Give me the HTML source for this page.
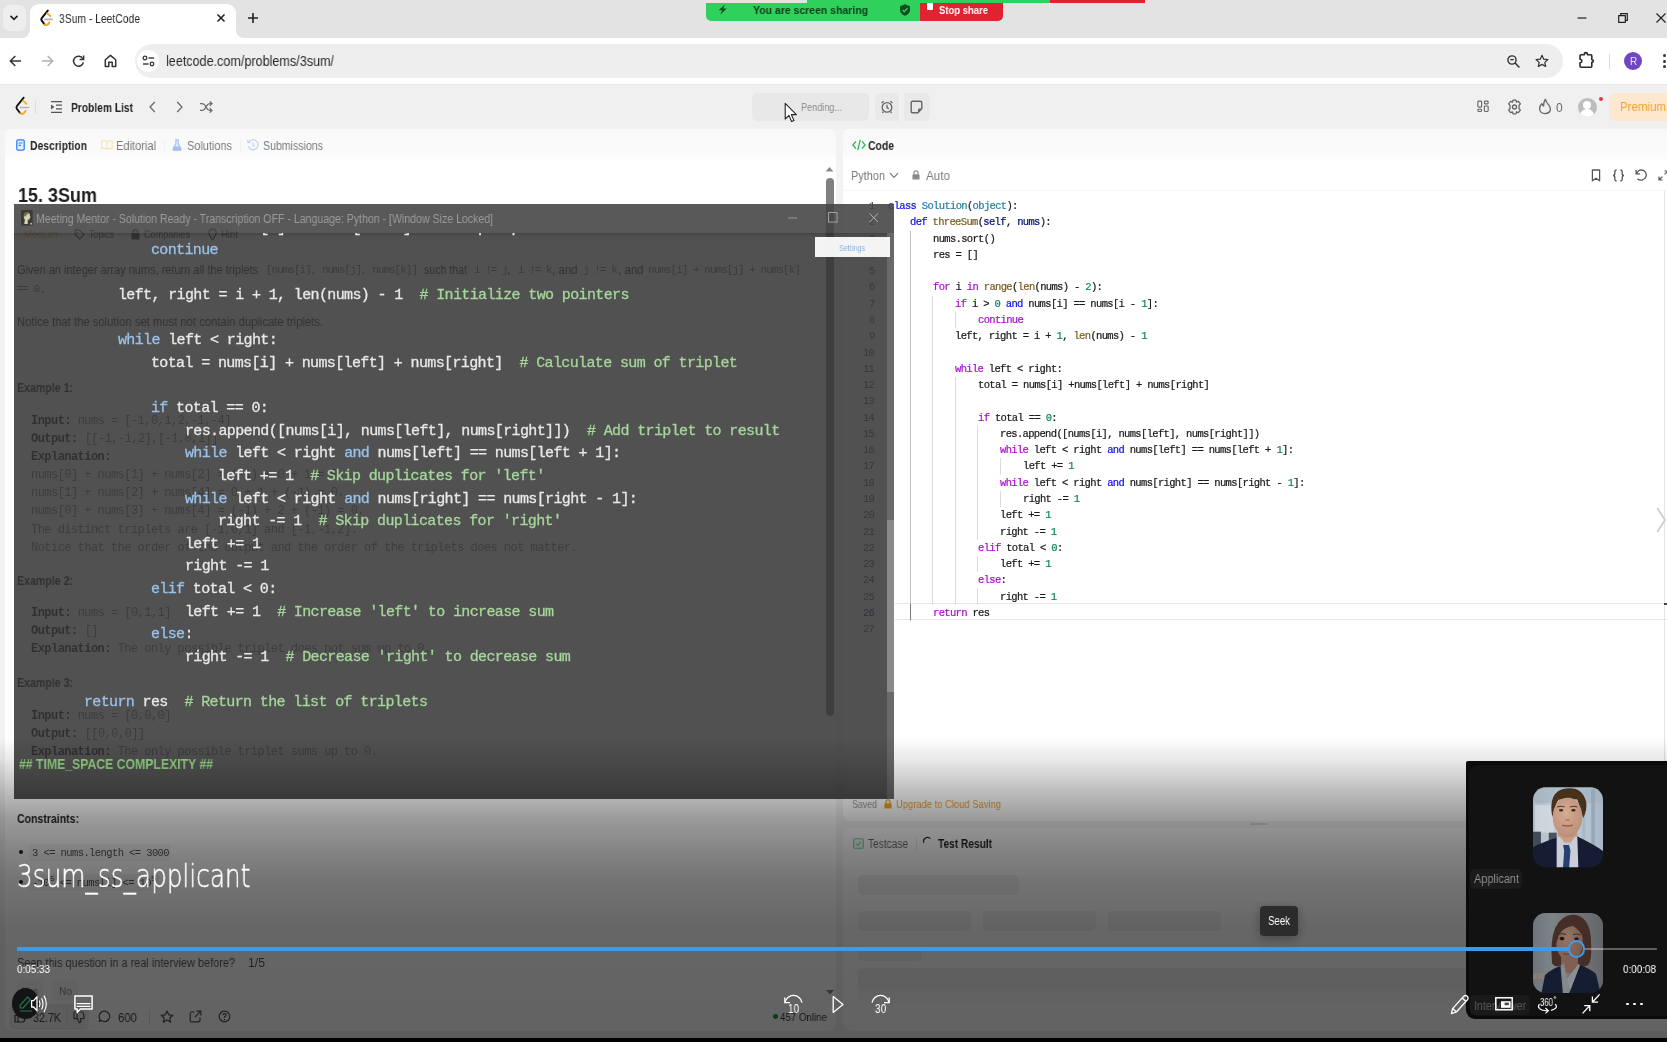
<!DOCTYPE html>
<html lang="en"><head><meta charset="utf-8"><title>3Sum - LeetCode</title>
<style>
html,body{margin:0;padding:0;background:#fff;}
body{width:1667px;height:1042px;overflow:hidden;font-family:"Liberation Sans",sans-serif;}
#root{position:relative;width:1667px;height:1042px;overflow:hidden;background:#f3f3f3;}
.t{position:absolute;white-space:nowrap;will-change:transform;}
.b{position:absolute;}
svg{position:absolute;overflow:visible;}
.blur{filter:blur(.35px);}
.ed{font:400 10.5px/14px 'Liberation Mono',monospace;letter-spacing:-0.661px;-webkit-text-stroke:.22px currentColor;}
.oc{font:400 15px/20px 'Liberation Mono',monospace;letter-spacing:-0.627px;-webkit-text-stroke:.3px currentColor;}

</style></head>
<body>
<div id="root">
<div class="b" style="left:0;top:0;width:1667px;height:38px;background:#e3e3e3"></div>
<div class="b" style="left:3px;top:5px;width:23px;height:26px;border-radius:7px;background:#eeeeee"></div>
<svg style="left:9px;top:14px" width="10" height="8" viewBox="0 0 10 8"><path d="M1.5 1.8 L5 5.3 L8.5 1.8" fill="none" stroke="#222" stroke-width="1.7"/></svg>
<div class="b" style="left:30px;top:4px;width:206px;height:34px;border-radius:9px 9px 0 0;background:#fff"></div>
<svg style="left:22px;top:30px" width="8" height="8" viewBox="0 0 8 8"><path d="M8 0 V8 H0 A8 8 0 0 0 8 0Z" fill="#fff"/></svg>
<svg style="left:236px;top:30px" width="8" height="8" viewBox="0 0 8 8"><path d="M0 0 V8 H8 A8 8 0 0 1 0 0Z" fill="#fff"/></svg>
<svg style="left:39.5px;top:10px" width="13" height="16" viewBox="0 0 14.5 18"><path d="M8.7 0.6 L1.9 9.1 Q0.8 10.5 1.9 11.9 L5.2 16.3" fill="none" stroke="#111" stroke-width="2.3" stroke-linecap="round" stroke-linejoin="round"/><path d="M5.2 16.3 Q7.4 17.8 9.2 15.8 L10.6 13.8" fill="none" stroke="#f5a623" stroke-width="2.3" stroke-linecap="round"/><path d="M7.9 3.7 L11.5 6.8" fill="none" stroke="#f5a623" stroke-width="2.1" stroke-linecap="round"/><path d="M5.4 10.5 H13.6" stroke="#b3b3b3" stroke-width="1.9" stroke-linecap="round"/></svg>
<div class="t " style="left:59.0px;top:10.5px;font:400 12px/16px 'Liberation Sans',sans-serif;color:#2a2a2a;transform-origin:0 50%;transform:scaleX(0.8612);">3Sum - LeetCode</div>
<svg style="left:216px;top:13px" width="10" height="10" viewBox="0 0 10 10"><path d="M1.5 1.5 L8.5 8.5 M8.5 1.5 L1.5 8.5" stroke="#222" stroke-width="1.6"/></svg>
<svg style="left:247px;top:12px" width="12" height="12" viewBox="0 0 12 12"><path d="M6 1 V11 M1 6 H11" stroke="#222" stroke-width="1.6"/></svg>
<svg style="left:1577px;top:13px" width="10" height="10" viewBox="0 0 10 10"><path d="M0.5 5 H9.5" stroke="#222" stroke-width="1.2"/></svg>
<svg style="left:1618px;top:13px" width="10" height="10" viewBox="0 0 10 10"><path d="M0.7 2.7 H7.3 V9.3 H0.7Z M2.7 2.7 V0.7 H9.3 V7.3 H7.3" fill="none" stroke="#222" stroke-width="1.2"/></svg>
<svg style="left:1656px;top:13px" width="11" height="10" viewBox="0 0 11 10"><path d="M0.5 0.5 L9.5 9.5 M9.5 0.5 L0.5 9.5" stroke="#222" stroke-width="1.2"/></svg>
<div class="b" style="left:706px;top:2.5px;width:214px;height:18px;border-radius:0 0 0 5px;background:#2fd15c"></div>
<div class="b" style="left:920px;top:2.5px;width:83px;height:18px;border-radius:0 0 5px 0;background:#e0242f"></div>
<svg style="left:717px;top:4px" width="10" height="11" viewBox="0 0 10 11"><path d="M8 0.4 L1.6 6.2 H5.2 L3.2 10.8 L9.8 4.6 H6.2Z" fill="#124d22"/></svg>
<div class="t " style="left:753.0px;top:3.0px;font:700 11px/14px 'Liberation Sans',sans-serif;color:#0f3d1b;transform-origin:0 50%;transform:scaleX(0.9517);">You are screen sharing</div>
<svg style="left:899px;top:4px" width="12" height="12" viewBox="0 0 12 12"><path d="M6 0.3 L11 2.2 V6 Q11 9.8 6 11.7 Q1 9.8 1 6 V2.2Z" fill="#124d22"/><path d="M3.6 6 L5.3 7.7 L8.5 4.3" fill="none" stroke="#2fd15c" stroke-width="1.3"/></svg>
<div class="b" style="left:927px;top:3px;width:6px;height:7px;background:#fff;border-radius:1px"></div>
<div class="t " style="left:939.0px;top:2.5px;font:700 11px/14px 'Liberation Sans',sans-serif;color:#fff;transform-origin:0 50%;transform:scaleX(0.8620);">Stop share</div>
<div class="b" style="left:807px;top:0;width:243px;height:3px;background:#2fd15c"></div>
<div class="b" style="left:1050px;top:0;width:95px;height:3px;background:#e0242f"></div>
<div class="b" style="left:0;top:38px;width:1667px;height:46px;background:#fff"></div>
<div class="b" style="left:0;top:84px;width:1667px;height:1px;background:#e9e9e9"></div>
<svg style="left:9px;top:55px" width="13" height="12" viewBox="0 0 13 12"><path d="M6.3 1 L1.3 6 L6.3 11 M1.5 6 H12" fill="none" stroke="#333" stroke-width="1.5"/></svg>
<svg style="left:41px;top:55px" width="13" height="12" viewBox="0 0 13 12"><path d="M6.7 1 L11.7 6 L6.7 11 M11.5 6 H1" fill="none" stroke="#b0b0b0" stroke-width="1.5"/></svg>
<svg style="left:72px;top:54px" width="13" height="14" viewBox="0 0 13 14"><path d="M10.8 4.6 A5 5 0 1 0 11.4 8.3" fill="none" stroke="#333" stroke-width="1.5"/><path d="M11.6 1.4 V5.4 H7.6" fill="none" stroke="#333" stroke-width="1.5"/></svg>
<svg style="left:104px;top:54px" width="13" height="14" viewBox="0 0 13 14"><path d="M1.3 5.8 L6.5 1.4 L11.7 5.8 V12.6 H8.2 V8.2 H4.8 V12.6 H1.3Z" fill="none" stroke="#333" stroke-width="1.5" stroke-linejoin="round"/></svg>
<div class="b" style="left:135px;top:44px;width:1428px;height:34px;border-radius:17px;background:#eeeeee"></div>
<div class="b" style="left:137px;top:50px;width:22px;height:22px;border-radius:11px;background:#fff"></div>
<svg style="left:142px;top:55px" width="13" height="12" viewBox="0 0 13 12"><circle cx="3" cy="3" r="1.8" fill="none" stroke="#333" stroke-width="1.3"/><path d="M6.5 3 H12" stroke="#333" stroke-width="1.4"/><circle cx="10" cy="9" r="1.8" fill="none" stroke="#333" stroke-width="1.3"/><path d="M1 9 H6.5" stroke="#333" stroke-width="1.4"/></svg>
<div class="t " style="left:166.0px;top:52.0px;font:400 14px/18px 'Liberation Sans',sans-serif;color:#2a2a2a;transform-origin:0 50%;transform:scaleX(0.8995);">leetcode.com/problems/3sum/</div>
<svg style="left:1506px;top:53.5px" width="15" height="15" viewBox="0 0 15 15"><circle cx="6" cy="6" r="4.1" fill="none" stroke="#333" stroke-width="1.4"/><path d="M9.1 9.1 L13.4 13.6" stroke="#333" stroke-width="1.5"/><path d="M4.2 5.6 H7.8" stroke="#333" stroke-width="1.3"/></svg>
<svg style="left:1534.8px;top:53.8px" width="14" height="13.6" viewBox="0 0 16 15"><path d="M8 1.2 L10 5.6 L14.8 6.1 L11.2 9.3 L12.2 14 L8 11.6 L3.8 14 L4.8 9.3 L1.2 6.1 L6 5.6Z" fill="none" stroke="#333" stroke-width="1.4" stroke-linejoin="round"/></svg>
<svg style="left:1578px;top:51px" width="17" height="18" viewBox="0 0 17 18"><path d="M3 3.7 H6.4 V3 Q6.4 1.6 7.9 1.6 Q9.4 1.6 9.4 3 V3.7 H12.8 Q13.8 3.7 13.8 4.7 V8.6 Q15.4 8.8 15.4 10 Q15.4 11.2 13.8 11.4 V15.2 Q13.8 16.2 12.8 16.2 H3 Q2 16.2 2 15.2 V11.8 Q3.9 11.6 3.9 10 Q3.9 8.4 2 8.2 V4.7 Q2 3.7 3 3.7Z" fill="none" stroke="#2a2a2a" stroke-width="1.6" stroke-linejoin="round"/></svg>
<div class="b" style="left:1608.6px;top:54px;width:1px;height:15px;background:#dcdcdc"></div>
<div class="b" style="left:1624px;top:52px;width:18px;height:18px;border-radius:9px;background:#6f45c0"></div>
<div class="t " style="left:1629.5px;top:54.5px;font:400 10px/13px 'Liberation Sans',sans-serif;color:#e8defa;">R</div>
<div class="b" style="left:1662.7px;top:54.4px;width:3px;height:3px;border-radius:2px;background:#333"></div><div class="b" style="left:1662.7px;top:59.6px;width:3px;height:3px;border-radius:2px;background:#333"></div><div class="b" style="left:1662.7px;top:64.8px;width:3px;height:3px;border-radius:2px;background:#333"></div>
<div class="b" style="left:0;top:85px;width:1667px;height:44px;background:#f0f0f0"></div>
<svg style="left:15px;top:97px" width="14.5" height="18" viewBox="0 0 14.5 18"><path d="M8.7 0.6 L1.9 9.1 Q0.8 10.5 1.9 11.9 L5.2 16.3" fill="none" stroke="#111" stroke-width="1.8" stroke-linecap="round" stroke-linejoin="round"/><path d="M5.2 16.3 Q7.4 17.8 9.2 15.8 L10.6 13.8" fill="none" stroke="#f5a623" stroke-width="1.8" stroke-linecap="round"/><path d="M7.9 3.7 L11.5 6.8" fill="none" stroke="#f5a623" stroke-width="1.7" stroke-linecap="round"/><path d="M5.4 10.5 H13.6" stroke="#b3b3b3" stroke-width="1.6" stroke-linecap="round"/></svg>
<div class="b" style="left:35px;top:100px;width:1px;height:14px;background:#dddddd"></div>
<svg style="left:50px;top:101px" width="13" height="12" viewBox="0 0 13 12"><path d="M1 0.6 H12 M6 4.2 H12 M6 7.8 H12 M1 11.4 H12" stroke="#555" stroke-width="1.3"/><path d="M1 3.4 L4.4 6 L1 8.6Z" fill="#555"/></svg>
<div class="t " style="left:71.0px;top:99.5px;font:700 12.5px/16px 'Liberation Sans',sans-serif;color:#262626;transform-origin:0 50%;transform:scaleX(0.8190);">Problem List</div>
<svg style="left:148px;top:101px" width="9" height="12" viewBox="0 0 9 12"><path d="M6.8 1 L2 6 L6.8 11" fill="none" stroke="#6a6a6a" stroke-width="1.3"/></svg>
<svg style="left:175px;top:101px" width="9" height="12" viewBox="0 0 9 12"><path d="M2.2 1 L7 6 L2.2 11" fill="none" stroke="#6a6a6a" stroke-width="1.3"/></svg>
<svg style="left:198.5px;top:100px" width="14" height="14" viewBox="0 0 14 14"><path d="M1 3.6 H3 Q4.8 3.6 5.8 5.1 L8.2 8.9 Q9.2 10.4 11 10.4 H12.8 M1 10.4 H3 Q4.8 10.4 5.8 8.9 L8.2 5.1 Q9.2 3.6 11 3.6 H12.8 M10.8 1.4 L13 3.6 L10.8 5.8 M10.8 8.2 L13 10.4 L10.8 12.6" fill="none" stroke="#6a6a6a" stroke-width="1.2"/></svg>
<div class="b" style="left:752px;top:93px;width:117px;height:28px;border-radius:5px;background:#e8e8e8"></div>
<div class="t " style="left:801.0px;top:100.0px;font:400 11.5px/15px 'Liberation Sans',sans-serif;color:#8c8c8c;transform-origin:0 50%;transform:scaleX(0.7916);">Pending...</div>
<div class="b" style="left:875px;top:93px;width:24px;height:28px;border-radius:5px 0 0 5px;background:#e9e9e9"></div>
<div class="b" style="left:904px;top:93px;width:26px;height:28px;border-radius:0 5px 5px 0;background:#e9e9e9"></div>
<svg style="left:880px;top:100px" width="14" height="14" viewBox="0 0 14 14"><circle cx="7" cy="7.4" r="4.8" fill="none" stroke="#666" stroke-width="1.3"/><path d="M7 4.8 V7.6 L8.8 8.8 M1.6 3 L3.6 1.2 M12.4 3 L10.4 1.2 M3.4 11.6 L2.4 13 M10.6 11.6 L11.6 13" fill="none" stroke="#666" stroke-width="1.3"/></svg>
<svg style="left:910px;top:100px" width="13" height="14" viewBox="0 0 13 14"><path d="M2.8 1.2 H10.2 Q11.8 1.2 11.8 2.8 V8.6 L8 12.8 H2.8 Q1.2 12.8 1.2 11.2 V2.8 Q1.2 1.2 2.8 1.2Z" fill="none" stroke="#666" stroke-width="1.4"/><path d="M11.8 8.6 H9.4 Q8 8.6 8 10 V12.8Z" fill="#666"/></svg>
<svg style="left:784px;top:102px" width="14" height="21" viewBox="0 0 14 21"><path d="M1.2 1.4 V17 L5 13.4 L7.6 19.6 L10 18.6 L7.4 12.6 H12.4Z" fill="#fff" stroke="#222" stroke-width="1.1" stroke-linejoin="round"/></svg>
<svg style="left:1477.2px;top:100.2px" width="12" height="12.6" viewBox="0 0 14 14"><rect x="1" y="1" width="4.4" height="7" rx="1" fill="none" stroke="#666" stroke-width="1.3"/><rect x="8.6" y="1" width="4.4" height="3.2" rx="1" fill="none" stroke="#666" stroke-width="1.3"/><rect x="1" y="10.4" width="4.4" height="2.6" rx="1" fill="none" stroke="#666" stroke-width="1.3"/><rect x="8.6" y="6.6" width="4.4" height="6.4" rx="1" fill="none" stroke="#666" stroke-width="1.3"/></svg>
<svg style="left:1507px;top:99px" width="15" height="16" viewBox="0 0 15 16"><path d="M6 1.2 H9 L9.5 3.2 L11.4 2.4 L13.4 4.8 L12 6.4 V9.6 L13.4 11.2 L11.4 13.6 L9.5 12.8 L9 14.8 H6 L5.5 12.8 L3.6 13.6 L1.6 11.2 L3 9.6 V6.4 L1.6 4.8 L3.6 2.4 L5.5 3.2Z" fill="none" stroke="#666" stroke-width="1.3" stroke-linejoin="round"/><circle cx="7.5" cy="8" r="2" fill="none" stroke="#666" stroke-width="1.3"/></svg>
<svg style="left:1538px;top:98px" width="14" height="17" viewBox="0 0 14 17"><path d="M7.4 1.2 Q8 4 10.4 6.6 Q12.6 9 12.4 11.4 Q12 15.4 7 15.6 Q2 15.4 1.6 11 Q1.4 8 4 5.6 Q4.4 7.6 5.6 8 Q5.4 4 7.4 1.2Z" fill="none" stroke="#666" stroke-width="1.3" stroke-linejoin="round"/></svg>
<div class="t " style="left:1556.0px;top:100.0px;font:400 12px/16px 'Liberation Sans',sans-serif;color:#666;">0</div>
<div class="b" style="left:1577.5px;top:97.5px;width:19px;height:19px;border-radius:10px;background:#bdbdbd;overflow:hidden"><div class="b" style="left:5.5px;top:3.5px;width:8px;height:8px;border-radius:4px;background:#fff"></div><div class="b" style="left:2.5px;top:11px;width:14px;height:13px;border-radius:7px;background:#fff"></div></div>
<div class="b" style="left:1598.5px;top:97px;width:4.4px;height:4.4px;border-radius:3px;background:#e8334a"></div>
<div class="b" style="left:1609px;top:93px;width:70px;height:28px;border-radius:6px;background:#fbe8cf"></div>
<div class="t " style="left:1620.0px;top:99.0px;font:400 12.5px/16px 'Liberation Sans',sans-serif;color:#f5a02d;transform-origin:0 50%;transform:scaleX(0.9199);">Premium</div>
<div class="b" style="left:5px;top:129px;width:831px;height:902px;border-radius:8px;background:#fff;overflow:hidden"><div class="b" style="left:0;top:0;width:831px;height:33px;background:linear-gradient(#f9f9f9,#fafafa 70%,#fff)"></div></div>
<svg style="left:16px;top:139px" width="9" height="12" viewBox="0 0 9 12"><rect x="0.8" y="0.8" width="7.4" height="10.4" rx="1.4" fill="#e5f0ff" stroke="#2f7ff0" stroke-width="1.3"/><path d="M2.6 4 H6.4 M2.6 6.4 H5" stroke="#2f7ff0" stroke-width="1.1"/></svg>
<div class="t " style="left:30.0px;top:137.5px;font:700 12px/16px 'Liberation Sans',sans-serif;color:#262626;transform-origin:0 50%;transform:scaleX(0.8635);">Description</div>
<svg style="left:101px;top:140px" width="12" height="10" viewBox="0 0 12 10"><path d="M6 1.6 Q3.6 0.4 0.8 1 V8.6 Q3.6 8 6 9.2 Q8.4 8 11.2 8.6 V1 Q8.4 0.4 6 1.6 V9" fill="none" stroke="#f6e2b4" stroke-width="1.1"/></svg>
<div class="t " style="left:116.0px;top:137.5px;font:400 12px/16px 'Liberation Sans',sans-serif;color:#7a7a7a;transform-origin:0 50%;transform:scaleX(0.9226);">Editorial</div>
<div class="b" style="left:164px;top:140px;width:1px;height:11px;background:#f0f0f0"></div>
<svg style="left:172px;top:139px" width="10" height="12" viewBox="0 0 10 12"><path d="M3.4 0.8 H6.6 M3.8 0.8 V4.6 L1 10 Q0.8 11.2 2 11.2 H8 Q9.2 11.2 9 10 L6.2 4.6 V0.8" fill="#dfe9fb" stroke="#a3c0f0" stroke-width="1.1"/><path d="M2.4 7.4 H7.6 L9 10 Q9.2 11.2 8 11.2 H2 Q0.8 11.2 1 10Z" fill="#a3c0f0"/></svg>
<div class="t " style="left:187.0px;top:137.5px;font:400 12px/16px 'Liberation Sans',sans-serif;color:#7a7a7a;transform-origin:0 50%;transform:scaleX(0.9116);">Solutions</div>
<div class="b" style="left:240px;top:140px;width:1px;height:11px;background:#f0f0f0"></div>
<svg style="left:247px;top:139px" width="12" height="12" viewBox="0 0 12 12"><path d="M2 3 A5 5 0 1 1 1.4 7.4" fill="none" stroke="#b7cff2" stroke-width="1.1"/><path d="M0.8 0.8 V3.4 H3.4" fill="none" stroke="#b7cff2" stroke-width="1.1"/><path d="M6 3.4 V6.2 L8 7.4" fill="none" stroke="#b7cff2" stroke-width="1.1"/></svg>
<div class="t " style="left:263.0px;top:137.5px;font:400 12px/16px 'Liberation Sans',sans-serif;color:#7a7a7a;transform-origin:0 50%;transform:scaleX(0.8820);">Submissions</div>
<div class="t " style="left:17.5px;top:181.5px;font:700 20px/26px 'Liberation Sans',sans-serif;color:#1f1f1f;transform-origin:0 50%;transform:scaleX(0.8995);">15. 3Sum</div>
<svg style="left:825px;top:166px" width="9" height="6" viewBox="0 0 9 6"><path d="M0.6 5.4 L4.5 1 L8.4 5.4Z" fill="#8a8a8a"/></svg>
<div class="b" style="left:826px;top:178px;width:8px;height:538px;border-radius:4px;background:#808080"></div>
<div class="t " style="left:24.0px;top:227.0px;font:400 11.5px/15px 'Liberation Sans',sans-serif;color:#d9a21b;transform-origin:0 50%;transform:scaleX(0.8312);">Medium</div>
<svg style="left:74px;top:229px" width="11" height="11" viewBox="0 0 11 11"><path d="M1 1 H5.4 L10 5.6 L5.6 10 L1 5.4Z" fill="none" stroke="#262626" stroke-width="1.1" stroke-linejoin="round"/><circle cx="3.4" cy="3.4" r="0.8" fill="#262626"/></svg>
<div class="t " style="left:89.0px;top:227.0px;font:400 11.5px/15px 'Liberation Sans',sans-serif;color:#262626;transform-origin:0 50%;transform:scaleX(0.7669);">Topics</div>
<svg style="left:131px;top:229px" width="9" height="11" viewBox="0 0 9 11"><rect x="0.5" y="4.6" width="8" height="6" rx="1" fill="#262626"/><path d="M2.2 4.8 V3.2 A2.3 2.3 0 0 1 6.8 3.2 V4.8" fill="none" stroke="#262626" stroke-width="1.3"/></svg>
<div class="t " style="left:144.0px;top:227.0px;font:400 11.5px/15px 'Liberation Sans',sans-serif;color:#262626;transform-origin:0 50%;transform:scaleX(0.7908);">Companies</div>
<svg style="left:208px;top:228px" width="9" height="13" viewBox="0 0 9 13"><path d="M2.6 8.6 Q0.8 7 0.8 4.8 A3.7 3.7 0 0 1 8.2 4.8 Q8.2 7 6.4 8.6 V10 H2.6Z M3 11.8 H6" fill="none" stroke="#262626" stroke-width="1.1"/></svg>
<div class="t " style="left:221.0px;top:227.0px;font:400 11.5px/15px 'Liberation Sans',sans-serif;color:#262626;transform-origin:0 50%;transform:scaleX(0.8312);">Hint</div>
<div class="t " style="left:17.0px;top:261.5px;font:400 12.5px/16px 'Liberation Sans',sans-serif;color:#262626;transform-origin:0 50%;transform:scaleX(0.8782);">Given an integer array nums, return all the triplets</div>
<div class="t " style="left:266.0px;top:263.0px;font:400 11px/14px 'Liberation Mono',monospace;color:#6e6e6e;letter-spacing:-1.009px;">[nums[i],&nbsp;nums[j],&nbsp;nums[k]]</div>
<div class="t " style="left:424.0px;top:261.5px;font:400 12.5px/16px 'Liberation Sans',sans-serif;color:#262626;transform-origin:0 50%;transform:scaleX(0.8477);">such that</div>
<div class="t " style="left:473.5px;top:263.0px;font:400 11px/14px 'Liberation Mono',monospace;color:#6e6e6e;letter-spacing:-1.018px;">i&nbsp;!=&nbsp;j</div>
<div class="t " style="left:507.0px;top:261.5px;font:400 12.5px/16px 'Liberation Sans',sans-serif;color:#262626;">,</div>
<div class="t " style="left:517.5px;top:263.0px;font:400 11px/14px 'Liberation Mono',monospace;color:#6e6e6e;letter-spacing:-1.018px;">i&nbsp;!=&nbsp;k</div>
<div class="t " style="left:551.5px;top:261.5px;font:400 12.5px/16px 'Liberation Sans',sans-serif;color:#262626;transform-origin:0 50%;transform:scaleX(0.9173);">, and</div>
<div class="t " style="left:582.5px;top:263.0px;font:400 11px/14px 'Liberation Mono',monospace;color:#6e6e6e;letter-spacing:-0.935px;">j&nbsp;!=&nbsp;k</div>
<div class="t " style="left:617.5px;top:261.5px;font:400 12.5px/16px 'Liberation Sans',sans-serif;color:#262626;transform-origin:0 50%;transform:scaleX(0.9173);">, and</div>
<div class="t " style="left:648.3px;top:263.0px;font:400 11px/14px 'Liberation Mono',monospace;color:#6e6e6e;letter-spacing:-0.972px;">nums[i]&nbsp;+&nbsp;nums[j]&nbsp;+&nbsp;nums[k]</div>
<div class="t " style="left:17.0px;top:281.5px;font:400 11px/14px 'Liberation Mono',monospace;color:#6e6e6e;letter-spacing:-1.102px;">==&nbsp;0</div>
<div class="t " style="left:41.0px;top:280.5px;font:400 12.5px/16px 'Liberation Sans',sans-serif;color:#262626;">.</div>
<div class="t " style="left:17.0px;top:313.5px;font:400 12.5px/16px 'Liberation Sans',sans-serif;color:#262626;transform-origin:0 50%;transform:scaleX(0.9007);">Notice that the solution set must not contain duplicate triplets.</div>
<div class="t " style="left:17.0px;top:380.0px;font:700 12.5px/16px 'Liberation Sans',sans-serif;color:#262626;transform-origin:0 50%;transform:scaleX(0.8485);">Example 1:</div>
<div class="t " style="left:31.0px;top:413.3px;font:700 12px/16px 'Liberation Mono',monospace;color:#262626;letter-spacing:-0.541px;">Input:</div>
<div class="t " style="left:71.0px;top:413.3px;font:400 12px/16px 'Liberation Mono',monospace;color:#777;letter-spacing:-0.541px;">&nbsp;nums&nbsp;=&nbsp;[-1,0,1,2,-1,-4]</div>
<div class="t " style="left:31.0px;top:431.3px;font:700 12px/16px 'Liberation Mono',monospace;color:#262626;letter-spacing:-0.541px;">Output:</div>
<div class="t " style="left:77.6px;top:431.3px;font:400 12px/16px 'Liberation Mono',monospace;color:#777;letter-spacing:-0.541px;">&nbsp;[[-1,-1,2],[-1,0,1]]</div>
<div class="t " style="left:31.0px;top:449.3px;font:700 12px/16px 'Liberation Mono',monospace;color:#262626;letter-spacing:-0.541px;">Explanation:</div>
<div class="t " style="left:31.0px;top:467.3px;font:400 12px/16px 'Liberation Mono',monospace;color:#777;letter-spacing:-0.541px;">nums[0]&nbsp;+&nbsp;nums[1]&nbsp;+&nbsp;nums[2]&nbsp;=&nbsp;(-1)&nbsp;+&nbsp;0&nbsp;+&nbsp;1&nbsp;=&nbsp;0.</div>
<div class="t " style="left:31.0px;top:485.3px;font:400 12px/16px 'Liberation Mono',monospace;color:#777;letter-spacing:-0.541px;">nums[1]&nbsp;+&nbsp;nums[2]&nbsp;+&nbsp;nums[4]&nbsp;=&nbsp;0&nbsp;+&nbsp;1&nbsp;+&nbsp;(-1)&nbsp;=&nbsp;0.</div>
<div class="t " style="left:31.0px;top:503.3px;font:400 12px/16px 'Liberation Mono',monospace;color:#777;letter-spacing:-0.541px;">nums[0]&nbsp;+&nbsp;nums[3]&nbsp;+&nbsp;nums[4]&nbsp;=&nbsp;(-1)&nbsp;+&nbsp;2&nbsp;+&nbsp;(-1)&nbsp;=&nbsp;0.</div>
<div class="t " style="left:31.0px;top:521.8px;font:400 12px/16px 'Liberation Mono',monospace;color:#777;letter-spacing:-0.541px;">The&nbsp;distinct&nbsp;triplets&nbsp;are&nbsp;[-1,0,1]&nbsp;and&nbsp;[-1,-1,2].</div>
<div class="t " style="left:31.0px;top:539.8px;font:400 12px/16px 'Liberation Mono',monospace;color:#777;letter-spacing:-0.541px;">Notice&nbsp;that&nbsp;the&nbsp;order&nbsp;of&nbsp;the&nbsp;output&nbsp;and&nbsp;the&nbsp;order&nbsp;of&nbsp;the&nbsp;triplets&nbsp;does&nbsp;not&nbsp;matter.</div>
<div class="t " style="left:17.0px;top:572.5px;font:700 12.5px/16px 'Liberation Sans',sans-serif;color:#262626;transform-origin:0 50%;transform:scaleX(0.8485);">Example 2:</div>
<div class="t " style="left:31.0px;top:605.3px;font:700 12px/16px 'Liberation Mono',monospace;color:#262626;letter-spacing:-0.541px;">Input:</div>
<div class="t " style="left:71.0px;top:605.3px;font:400 12px/16px 'Liberation Mono',monospace;color:#777;letter-spacing:-0.541px;">&nbsp;nums&nbsp;=&nbsp;[0,1,1]</div>
<div class="t " style="left:31.0px;top:623.3px;font:700 12px/16px 'Liberation Mono',monospace;color:#262626;letter-spacing:-0.541px;">Output:</div>
<div class="t " style="left:77.6px;top:623.3px;font:400 12px/16px 'Liberation Mono',monospace;color:#777;letter-spacing:-0.541px;">&nbsp;[]</div>
<div class="t " style="left:31.0px;top:641.3px;font:700 12px/16px 'Liberation Mono',monospace;color:#262626;letter-spacing:-0.541px;">Explanation:</div>
<div class="t " style="left:110.9px;top:641.3px;font:400 12px/16px 'Liberation Mono',monospace;color:#777;letter-spacing:-0.541px;">&nbsp;The&nbsp;only&nbsp;possible&nbsp;triplet&nbsp;does&nbsp;not&nbsp;sum&nbsp;up&nbsp;to&nbsp;0.</div>
<div class="t " style="left:17.0px;top:675.0px;font:700 12.5px/16px 'Liberation Sans',sans-serif;color:#262626;transform-origin:0 50%;transform:scaleX(0.8485);">Example 3:</div>
<div class="t " style="left:31.0px;top:707.8px;font:700 12px/16px 'Liberation Mono',monospace;color:#262626;letter-spacing:-0.541px;">Input:</div>
<div class="t " style="left:71.0px;top:707.8px;font:400 12px/16px 'Liberation Mono',monospace;color:#777;letter-spacing:-0.541px;">&nbsp;nums&nbsp;=&nbsp;[0,0,0]</div>
<div class="t " style="left:31.0px;top:725.8px;font:700 12px/16px 'Liberation Mono',monospace;color:#262626;letter-spacing:-0.541px;">Output:</div>
<div class="t " style="left:77.6px;top:725.8px;font:400 12px/16px 'Liberation Mono',monospace;color:#777;letter-spacing:-0.541px;">&nbsp;[[0,0,0]]</div>
<div class="t " style="left:31.0px;top:743.8px;font:700 12px/16px 'Liberation Mono',monospace;color:#262626;letter-spacing:-0.541px;">Explanation:</div>
<div class="t " style="left:110.9px;top:743.8px;font:400 12px/16px 'Liberation Mono',monospace;color:#777;letter-spacing:-0.541px;">&nbsp;The&nbsp;only&nbsp;possible&nbsp;triplet&nbsp;sums&nbsp;up&nbsp;to&nbsp;0.</div>
<div class="t " style="left:17.0px;top:810.5px;font:700 12.5px/16px 'Liberation Sans',sans-serif;color:#262626;transform-origin:0 50%;transform:scaleX(0.8423);">Constraints:</div>
<div class="b" style="left:18.8px;top:849.5px;width:4px;height:4px;border-radius:2px;background:#262626"></div>
<div class="b" style="left:29px;top:844px;width:142px;height:17px;border-radius:4px;background:#f5f5f5"></div>
<div class="t " style="left:32.0px;top:845.5px;font:400 10.5px/14px 'Liberation Mono',monospace;color:#555;letter-spacing:-0.592px;">3&nbsp;&lt;=&nbsp;nums.length&nbsp;&lt;=&nbsp;3000</div>
<div class="b" style="left:18.8px;top:879.5px;width:4px;height:4px;border-radius:2px;background:#262626"></div>
<div class="b" style="left:29px;top:874px;width:130px;height:17px;border-radius:4px;background:#f5f5f5"></div>
<div class="t " style="left:32.0px;top:876.0px;font:400 10.5px/14px 'Liberation Mono',monospace;color:#555;letter-spacing:-0.634px;">-10</div>
<div class="t " style="left:49.5px;top:874.0px;font:400 8px/10px 'Liberation Mono',monospace;color:#555;">5</div>
<div class="t " style="left:54.0px;top:876.0px;font:400 10.5px/14px 'Liberation Mono',monospace;color:#555;letter-spacing:-0.595px;">&nbsp;&lt;=&nbsp;nums[i]&nbsp;&lt;=&nbsp;10</div>
<div class="t " style="left:151.0px;top:874.0px;font:400 8px/10px 'Liberation Mono',monospace;color:#555;">5</div>
<div class="t " style="left:17.0px;top:955.0px;font:400 12px/16px 'Liberation Sans',sans-serif;color:#5a5a5a;transform-origin:0 50%;transform:scaleX(0.9103);">Seen this question in a real interview before?</div>
<div class="t " style="left:248.0px;top:955.0px;font:400 12px/16px 'Liberation Sans',sans-serif;color:#5a5a5a;transform-origin:0 50%;transform:scaleX(1.0191);">1/5</div>
<div class="b" style="left:17px;top:980px;width:26px;height:21px;border-radius:5px;background:#f8f8f8"></div>
<div class="b" style="left:52px;top:980px;width:26px;height:21px;border-radius:5px;background:#f6f6f6"></div>
<div class="t " style="left:22.0px;top:983.5px;font:400 11px/14px 'Liberation Sans',sans-serif;color:#8a8a8a;transform-origin:0 50%;transform:scaleX(0.8916);">Yes</div>
<div class="t " style="left:59.0px;top:983.5px;font:400 11px/14px 'Liberation Sans',sans-serif;color:#8a8a8a;transform-origin:0 50%;transform:scaleX(0.9246);">No</div>
<div class="b" style="left:9px;top:1004px;width:80px;height:26px;border-radius:6px;background:#efefef"></div>
<svg style="left:14px;top:1010px" width="12" height="13" viewBox="0 0 12 13"><path d="M1 12 H4 V5.4 H1Z M4 6 L6.4 1.4 Q8.2 1.4 7.8 3.4 L7.4 5.4 H10.4 Q11.4 5.6 11.2 6.8 L10.4 10.8 Q10 12 8.8 12 H4" fill="none" stroke="#444" stroke-width="1.2" stroke-linejoin="round"/></svg>
<div class="t " style="left:33.0px;top:1009.5px;font:400 12px/16px 'Liberation Sans',sans-serif;color:#444;transform-origin:0 50%;transform:scaleX(0.8929);">32.7K</div>
<div class="b" style="left:67px;top:1008px;width:1px;height:18px;background:#e0e0e0"></div>
<svg style="left:73px;top:1011px" width="12" height="13" viewBox="0 0 12 13"><path d="M1 1 H4 V7.6 H1Z M4 7 L6.4 11.6 Q8.2 11.6 7.8 9.6 L7.4 7.6 H10.4 Q11.4 7.4 11.2 6.2 L10.4 2.2 Q10 1 8.8 1 H4" fill="none" stroke="#555" stroke-width="1.2" stroke-linejoin="round"/></svg>
<svg style="left:98px;top:1010px" width="13" height="13" viewBox="0 0 13 13"><path d="M6.5 1.2 A5.2 5.2 0 1 1 3.4 10.6 L1.2 11.4 L2 9.2 A5.2 5.2 0 0 1 6.5 1.2Z" fill="none" stroke="#555" stroke-width="1.2" stroke-linejoin="round"/></svg>
<div class="t " style="left:118.0px;top:1009.5px;font:400 12px/16px 'Liberation Sans',sans-serif;color:#444;transform-origin:0 50%;transform:scaleX(0.9490);">600</div>
<div class="b" style="left:149px;top:1010px;width:1px;height:14px;background:#e0e0e0"></div>
<svg style="left:160px;top:1010px" width="14" height="13" viewBox="0 0 16 15"><path d="M8 1.2 L10 5.6 L14.8 6.1 L11.2 9.3 L12.2 14 L8 11.6 L3.8 14 L4.8 9.3 L1.2 6.1 L6 5.6Z" fill="none" stroke="#555" stroke-width="1.4" stroke-linejoin="round"/></svg>
<svg style="left:189px;top:1010px" width="13" height="13" viewBox="0 0 13 13"><path d="M5.4 2 H2.6 Q1.2 2 1.2 3.4 V10.4 Q1.2 11.8 2.6 11.8 H9.6 Q11 11.8 11 10.4 V7.6 M7.4 1.2 H11.8 V5.6 M11.6 1.4 L6 7" fill="none" stroke="#555" stroke-width="1.2"/></svg>
<svg style="left:218px;top:1010px" width="13" height="13" viewBox="0 0 13 13"><circle cx="6.5" cy="6.5" r="5.3" fill="none" stroke="#555" stroke-width="1.2"/><path d="M4.8 5.2 Q4.8 3.6 6.5 3.6 Q8.2 3.6 8.2 5 Q8.2 6 6.5 6.8 V7.8" fill="none" stroke="#555" stroke-width="1.2"/><circle cx="6.5" cy="9.6" r="0.8" fill="#555"/></svg>
<div class="b" style="left:773px;top:1014px;width:5px;height:5px;border-radius:3px;background:#1e9e3e"></div>
<div class="t " style="left:780.0px;top:1010.0px;font:400 11.5px/15px 'Liberation Sans',sans-serif;color:#444;transform-origin:0 50%;transform:scaleX(0.8449);">457 Online</div>
<div class="b" style="left:843px;top:129px;width:840px;height:692px;border-radius:8px;background:#fff;overflow:hidden"><div class="b" style="left:0;top:0;width:840px;height:32px;background:linear-gradient(#f9f9f9,#fafafa 70%,#fff)"></div></div>
<svg style="left:852px;top:139px" width="14" height="12" viewBox="0 0 14 12"><path d="M4 2.4 L0.9 6 L4 9.6 M10 2.4 L13.1 6 L10 9.6 M8.2 0.8 L5.8 11.2" fill="none" stroke="#2db55d" stroke-width="1.3"/></svg>
<div class="t " style="left:868.0px;top:137.5px;font:700 12.5px/16px 'Liberation Sans',sans-serif;color:#262626;transform-origin:0 50%;transform:scaleX(0.8321);">Code</div>
<div class="t " style="left:851.0px;top:167.5px;font:400 12.5px/16px 'Liberation Sans',sans-serif;color:#7a7a7a;transform-origin:0 50%;transform:scaleX(0.8737);">Python</div>
<svg style="left:889px;top:172px" width="10" height="7" viewBox="0 0 10 7"><path d="M1 1.2 L5 5.4 L9 1.2" fill="none" stroke="#7a7a7a" stroke-width="1.2"/></svg>
<svg style="left:912px;top:170px" width="8" height="10" viewBox="0 0 9 11"><rect x="0.5" y="4.6" width="8" height="6" rx="1" fill="#8a8a8a"/><path d="M2.2 4.8 V3.2 A2.3 2.3 0 0 1 6.8 3.2 V4.8" fill="none" stroke="#8a8a8a" stroke-width="1.3"/></svg>
<div class="t " style="left:926.0px;top:167.5px;font:400 12.5px/16px 'Liberation Sans',sans-serif;color:#7a7a7a;transform-origin:0 50%;transform:scaleX(0.9334);">Auto</div>
<svg style="left:1591px;top:169px" width="10" height="13" viewBox="0 0 10 13"><path d="M1.4 1 H8.6 V11.8 L5 9.2 L1.4 11.8Z" fill="none" stroke="#555" stroke-width="1.3" stroke-linejoin="round"/></svg>
<svg style="left:1612px;top:169px" width="13" height="13" viewBox="0 0 13 13"><path d="M4.6 1 Q2.8 1 2.8 2.8 V4.8 Q2.8 6.5 1 6.5 Q2.8 6.5 2.8 8.2 V10.2 Q2.8 12 4.6 12 M8.4 1 Q10.2 1 10.2 2.8 V4.8 Q10.2 6.5 12 6.5 Q10.2 6.5 10.2 8.2 V10.2 Q10.2 12 8.4 12" fill="none" stroke="#555" stroke-width="1.3"/></svg>
<svg style="left:1634px;top:168px" width="13" height="14" viewBox="0 0 13 14"><path d="M2.1 1.9 V5.9 H6.1" fill="none" stroke="#555" stroke-width="1.3"/><path d="M2.5 5.6 Q4.4 1.8 7.4 1.8 A5.2 5.2 0 1 1 3.5 10.8" fill="none" stroke="#555" stroke-width="1.3"/></svg>
<svg style="left:1657.6px;top:169.6px" width="11" height="11" viewBox="0 0 11 11"><path d="M6.4 1 H10 V4.6 M10 1 L6.6 4.4 M4.6 10 H1 V6.4 M1 10 L4.4 6.6" fill="none" stroke="#555" stroke-width="1.2"/></svg>
<div class="b" style="left:843px;top:190px;width:840px;height:1px;background:#f7f7f7"></div>
<div class="b" style="left:1664px;top:191px;width:1px;height:580px;background:#e4e4e4"></div>
<div class="b" style="left:895px;top:603px;width:790px;height:15px;border-top:1.5px solid #e6e6e6;border-bottom:1.5px solid #e6e6e6"></div>
<div class="b" style="left:909.8px;top:230.5px;width:1px;height:390.5px;background:#c2c2c2"></div>
<div class="b" style="left:932.3px;top:295.6px;width:1px;height:309.1px;background:#dcdcdc"></div>
<div class="b" style="left:954.9px;top:311.9px;width:1px;height:16.3px;background:#dcdcdc"></div>
<div class="b" style="left:954.9px;top:376.9px;width:1px;height:227.8px;background:#dcdcdc"></div>
<div class="b" style="left:977.4px;top:425.7px;width:1px;height:113.9px;background:#dcdcdc"></div>
<div class="b" style="left:977.4px;top:555.9px;width:1px;height:16.3px;background:#dcdcdc"></div>
<div class="b" style="left:977.4px;top:588.4px;width:1px;height:16.3px;background:#dcdcdc"></div>
<div class="b" style="left:1000.0px;top:458.3px;width:1px;height:16.3px;background:#dcdcdc"></div>
<div class="b" style="left:1000.0px;top:490.8px;width:1px;height:16.3px;background:#dcdcdc"></div>
<div class="t " style="left:868.9px;top:199.1px;font:400 10.5px/14px 'Liberation Mono',monospace;color:#44525c;">1</div>
<div class="t ed" style="left:887.6px;top:199.1px"><span style="color:#1010e0">class&nbsp;</span><span style="color:#267f99">Solution</span><span style="color:#1a1a1a">(</span><span style="color:#267f99">object</span><span style="color:#1a1a1a">):</span></div>
<div class="t " style="left:868.9px;top:215.4px;font:400 10.5px/14px 'Liberation Mono',monospace;color:#44525c;">2</div>
<div class="t ed" style="left:910.2px;top:215.4px"><span style="color:#1010e0">def&nbsp;</span><span style="color:#795e26">threeSum</span><span style="color:#1a1a1a">(</span><span style="color:#001080">self</span><span style="color:#1a1a1a">,&nbsp;</span><span style="color:#001080">nums</span><span style="color:#1a1a1a">):</span></div>
<div class="t " style="left:868.9px;top:231.6px;font:400 10.5px/14px 'Liberation Mono',monospace;color:#44525c;">3</div>
<div class="t ed" style="left:932.7px;top:231.6px"><span style="color:#1a1a1a">nums.sort()</span></div>
<div class="t " style="left:868.9px;top:247.9px;font:400 10.5px/14px 'Liberation Mono',monospace;color:#44525c;">4</div>
<div class="t ed" style="left:932.7px;top:247.9px"><span style="color:#1a1a1a">res&nbsp;=&nbsp;[]</span></div>
<div class="t " style="left:868.9px;top:264.2px;font:400 10.5px/14px 'Liberation Mono',monospace;color:#44525c;">5</div>
<div class="t " style="left:868.9px;top:280.4px;font:400 10.5px/14px 'Liberation Mono',monospace;color:#44525c;">6</div>
<div class="t ed" style="left:932.7px;top:280.4px"><span style="color:#a810d0">for&nbsp;</span><span style="color:#1a1a1a">i&nbsp;</span><span style="color:#a810d0">in&nbsp;</span><span style="color:#795e26">range</span><span style="color:#1a1a1a">(</span><span style="color:#795e26">len</span><span style="color:#1a1a1a">(nums)&nbsp;-&nbsp;</span><span style="color:#098658">2</span><span style="color:#1a1a1a">):</span></div>
<div class="t " style="left:868.9px;top:296.7px;font:400 10.5px/14px 'Liberation Mono',monospace;color:#44525c;">7</div>
<div class="t ed" style="left:955.3px;top:296.7px"><span style="color:#a810d0">if&nbsp;</span><span style="color:#1a1a1a">i&nbsp;&gt;&nbsp;</span><span style="color:#098658">0&nbsp;</span><span style="color:#1010e0">and&nbsp;</span><span style="color:#1a1a1a">nums[i]&nbsp;==&nbsp;nums[i&nbsp;-&nbsp;</span><span style="color:#098658">1</span><span style="color:#1a1a1a">]:</span></div>
<div class="t " style="left:868.9px;top:313.0px;font:400 10.5px/14px 'Liberation Mono',monospace;color:#44525c;">8</div>
<div class="t ed" style="left:977.8px;top:313.0px"><span style="color:#a810d0">continue</span></div>
<div class="t " style="left:868.9px;top:329.3px;font:400 10.5px/14px 'Liberation Mono',monospace;color:#44525c;">9</div>
<div class="t ed" style="left:955.3px;top:329.3px"><span style="color:#1a1a1a">left,&nbsp;right&nbsp;=&nbsp;i&nbsp;+&nbsp;</span><span style="color:#098658">1</span><span style="color:#1a1a1a">,&nbsp;</span><span style="color:#795e26">len</span><span style="color:#1a1a1a">(nums)&nbsp;-&nbsp;</span><span style="color:#098658">1</span></div>
<div class="t " style="left:863.3px;top:345.5px;font:400 10.5px/14px 'Liberation Mono',monospace;color:#44525c;letter-spacing:-0.701px;">10</div>
<div class="t " style="left:863.3px;top:361.8px;font:400 10.5px/14px 'Liberation Mono',monospace;color:#44525c;letter-spacing:-0.701px;">11</div>
<div class="t ed" style="left:955.3px;top:361.8px"><span style="color:#a810d0">while&nbsp;</span><span style="color:#1a1a1a">left&nbsp;&lt;&nbsp;right:</span></div>
<div class="t " style="left:863.3px;top:378.1px;font:400 10.5px/14px 'Liberation Mono',monospace;color:#44525c;letter-spacing:-0.701px;">12</div>
<div class="t ed" style="left:977.8px;top:378.1px"><span style="color:#1a1a1a">total&nbsp;=&nbsp;nums[i]&nbsp;+nums[left]&nbsp;+&nbsp;nums[right]</span></div>
<div class="t " style="left:863.3px;top:394.3px;font:400 10.5px/14px 'Liberation Mono',monospace;color:#44525c;letter-spacing:-0.701px;">13</div>
<div class="t " style="left:863.3px;top:410.6px;font:400 10.5px/14px 'Liberation Mono',monospace;color:#44525c;letter-spacing:-0.701px;">14</div>
<div class="t ed" style="left:977.8px;top:410.6px"><span style="color:#a810d0">if&nbsp;</span><span style="color:#1a1a1a">total&nbsp;==&nbsp;</span><span style="color:#098658">0</span><span style="color:#1a1a1a">:</span></div>
<div class="t " style="left:863.3px;top:426.9px;font:400 10.5px/14px 'Liberation Mono',monospace;color:#44525c;letter-spacing:-0.701px;">15</div>
<div class="t ed" style="left:1000.4px;top:426.9px"><span style="color:#1a1a1a">res.append([nums[i],&nbsp;nums[left],&nbsp;nums[right]])</span></div>
<div class="t " style="left:863.3px;top:443.1px;font:400 10.5px/14px 'Liberation Mono',monospace;color:#44525c;letter-spacing:-0.701px;">16</div>
<div class="t ed" style="left:1000.4px;top:443.1px"><span style="color:#a810d0">while&nbsp;</span><span style="color:#1a1a1a">left&nbsp;&lt;&nbsp;right&nbsp;</span><span style="color:#1010e0">and&nbsp;</span><span style="color:#1a1a1a">nums[left]&nbsp;==&nbsp;nums[left&nbsp;+&nbsp;</span><span style="color:#098658">1</span><span style="color:#1a1a1a">]:</span></div>
<div class="t " style="left:863.3px;top:459.4px;font:400 10.5px/14px 'Liberation Mono',monospace;color:#44525c;letter-spacing:-0.701px;">17</div>
<div class="t ed" style="left:1023.0px;top:459.4px"><span style="color:#1a1a1a">left&nbsp;+=&nbsp;</span><span style="color:#098658">1</span></div>
<div class="t " style="left:863.3px;top:475.7px;font:400 10.5px/14px 'Liberation Mono',monospace;color:#44525c;letter-spacing:-0.701px;">18</div>
<div class="t ed" style="left:1000.4px;top:475.7px"><span style="color:#a810d0">while&nbsp;</span><span style="color:#1a1a1a">left&nbsp;&lt;&nbsp;right&nbsp;</span><span style="color:#1010e0">and&nbsp;</span><span style="color:#1a1a1a">nums[right]&nbsp;==&nbsp;nums[right&nbsp;-&nbsp;</span><span style="color:#098658">1</span><span style="color:#1a1a1a">]:</span></div>
<div class="t " style="left:863.3px;top:492.0px;font:400 10.5px/14px 'Liberation Mono',monospace;color:#44525c;letter-spacing:-0.701px;">19</div>
<div class="t ed" style="left:1023.0px;top:492.0px"><span style="color:#1a1a1a">right&nbsp;-=&nbsp;</span><span style="color:#098658">1</span></div>
<div class="t " style="left:863.3px;top:508.2px;font:400 10.5px/14px 'Liberation Mono',monospace;color:#44525c;letter-spacing:-0.701px;">20</div>
<div class="t ed" style="left:1000.4px;top:508.2px"><span style="color:#1a1a1a">left&nbsp;+=&nbsp;</span><span style="color:#098658">1</span></div>
<div class="t " style="left:863.3px;top:524.5px;font:400 10.5px/14px 'Liberation Mono',monospace;color:#44525c;letter-spacing:-0.701px;">21</div>
<div class="t ed" style="left:1000.4px;top:524.5px"><span style="color:#1a1a1a">right&nbsp;-=&nbsp;</span><span style="color:#098658">1</span></div>
<div class="t " style="left:863.3px;top:540.8px;font:400 10.5px/14px 'Liberation Mono',monospace;color:#44525c;letter-spacing:-0.701px;">22</div>
<div class="t ed" style="left:977.8px;top:540.8px"><span style="color:#a810d0">elif&nbsp;</span><span style="color:#1a1a1a">total&nbsp;&lt;&nbsp;</span><span style="color:#098658">0</span><span style="color:#1a1a1a">:</span></div>
<div class="t " style="left:863.3px;top:557.0px;font:400 10.5px/14px 'Liberation Mono',monospace;color:#44525c;letter-spacing:-0.701px;">23</div>
<div class="t ed" style="left:1000.4px;top:557.0px"><span style="color:#1a1a1a">left&nbsp;+=&nbsp;</span><span style="color:#098658">1</span></div>
<div class="t " style="left:863.3px;top:573.3px;font:400 10.5px/14px 'Liberation Mono',monospace;color:#44525c;letter-spacing:-0.701px;">24</div>
<div class="t ed" style="left:977.8px;top:573.3px"><span style="color:#a810d0">else</span><span style="color:#1a1a1a">:</span></div>
<div class="t " style="left:863.3px;top:589.6px;font:400 10.5px/14px 'Liberation Mono',monospace;color:#44525c;letter-spacing:-0.701px;">25</div>
<div class="t ed" style="left:1000.4px;top:589.6px"><span style="color:#1a1a1a">right&nbsp;-=&nbsp;</span><span style="color:#098658">1</span></div>
<div class="t " style="left:863.3px;top:605.9px;font:400 10.5px/14px 'Liberation Mono',monospace;color:#0b216f;letter-spacing:-0.701px;">26</div>
<div class="t ed" style="left:932.7px;top:605.9px"><span style="color:#a810d0">return&nbsp;</span><span style="color:#1a1a1a">res</span></div>
<div class="t " style="left:863.3px;top:622.1px;font:400 10.5px/14px 'Liberation Mono',monospace;color:#44525c;letter-spacing:-0.701px;">27</div>
<div class="b" style="left:909.8px;top:604px;width:1px;height:16px;background:#7a7a7a"></div>
<div class="b" style="left:1664px;top:603px;width:3px;height:1.6px;background:#444"></div>
<svg style="left:1656px;top:507px" width="12" height="26" viewBox="0 0 12 26"><path d="M1.5 1.5 L9 13 L1.5 24.5" fill="none" stroke="#c8c8c8" stroke-width="1.6" stroke-linecap="round"/></svg>
<div class="t " style="left:852.0px;top:797.0px;font:400 11px/14px 'Liberation Sans',sans-serif;color:#9a9a9a;transform-origin:0 50%;transform:scaleX(0.8016);">Saved</div>
<svg style="left:884px;top:799px" width="8" height="10" viewBox="0 0 9 11"><rect x="0.5" y="4.6" width="8" height="6" rx="1" fill="#f0a020"/><path d="M2.2 4.8 V3.2 A2.3 2.3 0 0 1 6.8 3.2 V4.8" fill="none" stroke="#f0a020" stroke-width="1.3"/></svg>
<div class="t " style="left:896.0px;top:797.0px;font:400 11px/14px 'Liberation Sans',sans-serif;color:#f0a030;transform-origin:0 50%;transform:scaleX(0.8543);">Upgrade to Cloud Saving</div>
<div class="b" style="left:1250px;top:823px;width:18px;height:2px;border-radius:1px;background:#d8d8d8"></div>
<div class="b" style="left:843px;top:828px;width:840px;height:203px;border-radius:8px;background:#fff;overflow:hidden"><div class="b" style="left:0;top:0;width:840px;height:32px;background:#fcfcfc"></div></div>
<svg style="left:853px;top:838px" width="11" height="11" viewBox="0 0 11 11"><rect x="0.7" y="0.7" width="9.6" height="9.6" rx="1.4" fill="#eefaf2" stroke="#7fd09c" stroke-width="1.1"/><path d="M3 5.6 L4.8 7.4 L8 3.6" fill="none" stroke="#7fd09c" stroke-width="1.1"/></svg>
<div class="t " style="left:868.0px;top:836.0px;font:400 12px/16px 'Liberation Sans',sans-serif;color:#6a6a6a;transform-origin:0 50%;transform:scaleX(0.8447);">Testcase</div>
<div class="b" style="left:916px;top:838px;width:1px;height:12px;background:#e6e6e6"></div>
<svg style="left:922px;top:836px" width="10" height="10" viewBox="0 0 10 10"><path d="M1.6 6.4 A4 4 0 0 1 8 2.4" fill="none" stroke="#333" stroke-width="1.2" stroke-linecap="round"/></svg>
<div class="t " style="left:938.0px;top:836.0px;font:700 12px/16px 'Liberation Sans',sans-serif;color:#262626;transform-origin:0 50%;transform:scaleX(0.8465);">Test Result</div>
<div class="b" style="left:858px;top:875px;width:161px;height:20px;border-radius:5px;background:#f2f2f2"></div>
<div class="b" style="left:858px;top:911px;width:113px;height:20px;border-radius:5px;background:#f2f2f2"></div>
<div class="b" style="left:983px;top:911px;width:113px;height:20px;border-radius:5px;background:#f2f2f2"></div>
<div class="b" style="left:1108px;top:911px;width:113px;height:20px;border-radius:5px;background:#f2f2f2"></div>
<div class="b" style="left:858px;top:947px;width:64px;height:14px;border-radius:5px;background:#f2f2f2"></div>
<div class="b" style="left:858px;top:968px;width:800px;height:40px;border-radius:5px;background:linear-gradient(#f1f1f1,#f3f3f3 45%,#fff)"></div>
<div id="mm" class="b" style="left:14px;top:204px;width:880px;height:594.7px;background:rgba(50,50,50,.85);overflow:hidden">
<div class="b" style="left:0;top:0;width:880px;height:28.5px;background:rgba(120,120,120,.22)"></div>
<div class="b" style="left:0;top:28.5px;width:873px;height:4px;background:linear-gradient(rgba(0,0,0,.16),rgba(0,0,0,0))"></div>
<svg style="left:6.8px;top:5.5px" width="11.6" height="15.6" viewBox="0 0 12 16"><rect x="0" y="0" width="12" height="16" fill="#3c3a38"/><path d="M6.4 2.6 Q9.6 2.8 9.2 6 L10 7.6 L9 8 L8.8 9.8 L7 10 L7 14.5 L3.4 14.5 L4 10 Q2.4 8.4 3 5.4 Q3.8 2.6 6.4 2.6Z" fill="#d8d2b4"/><path d="M2.6 5.4 Q3.4 2 6.8 2.2 Q8.8 2.4 9.2 4 Q7 3.6 6 5 Q5 6.6 3.8 7Z" fill="#7d704c"/><circle cx="10.4" cy="14.2" r="1" fill="#bdbdbd"/></svg>
<div class="t " style="left:22.0px;top:6.5px;font:400 12px/16px 'Liberation Sans',sans-serif;color:#9b9b9b;transform-origin:0 50%;transform:scaleX(0.8807);">Meeting Mentor - Solution Ready - Transcription OFF - Language: Python - [Window Size Locked]</div>
<svg style="left:774px;top:13px" width="10" height="2" viewBox="0 0 10 2"><path d="M0 1 H9" stroke="#9a9a9a" stroke-width="1"/></svg>
<svg style="left:814px;top:8px" width="10" height="11" viewBox="0 0 10 11"><rect x="0.5" y="0.5" width="8.6" height="9.6" fill="none" stroke="#a0a0a0" stroke-width="1"/></svg>
<svg style="left:855px;top:9px" width="10" height="10" viewBox="0 0 10 10"><path d="M0.5 0.5 L9 9 M9 0.5 L0.5 9" stroke="#b0b0b0" stroke-width="1"/></svg>
<div class="b" style="left:873px;top:28.5px;width:7px;height:567px;background:rgba(255,255,255,.14)"></div>
<div class="b" style="left:873px;top:316px;width:7px;height:172px;background:rgba(255,255,255,.22)"></div>
<div class="b" style="left:801px;top:33px;width:75px;height:20px;background:rgba(255,255,255,.94)"></div>
<div class="t " style="left:825.0px;top:37.5px;font:400 9.5px/12px 'Liberation Sans',sans-serif;color:#8db4df;transform-origin:0 50%;transform:scaleX(0.7575);">Settings</div>
<div class="b" style="left:0;top:28.5px;width:873px;height:566px;overflow:hidden">
<div class="t oc" style="left:103.9px;top:-13.8px"><span style="color:#9ac1ea">if</span><span style="color:#e9e9e6">&nbsp;i&nbsp;&gt;&nbsp;0&nbsp;</span><span style="color:#9ac1ea">and</span><span style="color:#e9e9e6">&nbsp;nums[i]&nbsp;==&nbsp;nums[i&nbsp;-&nbsp;1]:&nbsp;&nbsp;</span><span style="color:#e9e9e6">#&nbsp;Skip&nbsp;duplicates&nbsp;for&nbsp;&#x27;i&#x27;</span></div>
<div class="t oc" style="left:137.4px;top:8.5px"><span style="color:#9ac1ea">continue</span></div>
<div class="t oc" style="left:103.9px;top:53.7px"><span style="color:#e9e9e6">left,&nbsp;right&nbsp;=&nbsp;i&nbsp;+&nbsp;1,&nbsp;len(nums)&nbsp;-&nbsp;1&nbsp;&nbsp;</span><span style="color:#a5d69b">#&nbsp;Initialize&nbsp;two&nbsp;pointers</span></div>
<div class="t oc" style="left:103.9px;top:98.9px"><span style="color:#9ac1ea">while</span><span style="color:#e9e9e6">&nbsp;left&nbsp;&lt;&nbsp;right:</span></div>
<div class="t oc" style="left:137.4px;top:121.5px"><span style="color:#e9e9e6">total&nbsp;=&nbsp;nums[i]&nbsp;+&nbsp;nums[left]&nbsp;+&nbsp;nums[right]&nbsp;&nbsp;</span><span style="color:#a5d69b">#&nbsp;Calculate&nbsp;sum&nbsp;of&nbsp;triplet</span></div>
<div class="t oc" style="left:137.4px;top:166.7px"><span style="color:#9ac1ea">if</span><span style="color:#e9e9e6">&nbsp;total&nbsp;==&nbsp;0:</span></div>
<div class="t oc" style="left:170.9px;top:189.3px"><span style="color:#e9e9e6">res.append([nums[i],&nbsp;nums[left],&nbsp;nums[right]])&nbsp;&nbsp;</span><span style="color:#a5d69b">#&nbsp;Add&nbsp;triplet&nbsp;to&nbsp;result</span></div>
<div class="t oc" style="left:170.9px;top:211.9px"><span style="color:#9ac1ea">while</span><span style="color:#e9e9e6">&nbsp;left&nbsp;&lt;&nbsp;right&nbsp;</span><span style="color:#9ac1ea">and</span><span style="color:#e9e9e6">&nbsp;nums[left]&nbsp;==&nbsp;nums[left&nbsp;+&nbsp;1]:</span></div>
<div class="t oc" style="left:204.4px;top:234.5px"><span style="color:#e9e9e6">left&nbsp;+=&nbsp;1&nbsp;&nbsp;</span><span style="color:#a5d69b">#&nbsp;Skip&nbsp;duplicates&nbsp;for&nbsp;&#x27;left&#x27;</span></div>
<div class="t oc" style="left:170.9px;top:257.1px"><span style="color:#9ac1ea">while</span><span style="color:#e9e9e6">&nbsp;left&nbsp;&lt;&nbsp;right&nbsp;</span><span style="color:#9ac1ea">and</span><span style="color:#e9e9e6">&nbsp;nums[right]&nbsp;==&nbsp;nums[right&nbsp;-&nbsp;1]:</span></div>
<div class="t oc" style="left:204.4px;top:279.7px"><span style="color:#e9e9e6">right&nbsp;-=&nbsp;1&nbsp;&nbsp;</span><span style="color:#a5d69b">#&nbsp;Skip&nbsp;duplicates&nbsp;for&nbsp;&#x27;right&#x27;</span></div>
<div class="t oc" style="left:170.9px;top:302.3px"><span style="color:#e9e9e6">left&nbsp;+=&nbsp;1</span></div>
<div class="t oc" style="left:170.9px;top:324.9px"><span style="color:#e9e9e6">right&nbsp;-=&nbsp;1</span></div>
<div class="t oc" style="left:137.4px;top:347.5px"><span style="color:#9ac1ea">elif</span><span style="color:#e9e9e6">&nbsp;total&nbsp;&lt;&nbsp;0:</span></div>
<div class="t oc" style="left:170.9px;top:370.1px"><span style="color:#e9e9e6">left&nbsp;+=&nbsp;1&nbsp;&nbsp;</span><span style="color:#a5d69b">#&nbsp;Increase&nbsp;&#x27;left&#x27;&nbsp;to&nbsp;increase&nbsp;sum</span></div>
<div class="t oc" style="left:137.4px;top:392.7px"><span style="color:#9ac1ea">else</span><span style="color:#e9e9e6">:</span></div>
<div class="t oc" style="left:170.9px;top:415.3px"><span style="color:#e9e9e6">right&nbsp;-=&nbsp;1&nbsp;&nbsp;</span><span style="color:#a5d69b">#&nbsp;Decrease&nbsp;&#x27;right&#x27;&nbsp;to&nbsp;decrease&nbsp;sum</span></div>
<div class="t oc" style="left:70.4px;top:460.5px"><span style="color:#9ac1ea">return</span><span style="color:#e9e9e6">&nbsp;res&nbsp;&nbsp;</span><span style="color:#a5d69b">#&nbsp;Return&nbsp;the&nbsp;list&nbsp;of&nbsp;triplets</span></div>
</div>
<div class="t " style="left:5.0px;top:550.2px;font:700 15px/20px 'Liberation Sans',sans-serif;color:#93d184;transform-origin:0 50%;transform:scaleX(0.8156);">## TIME_SPACE COMPLEXITY ##</div>
</div>
<div class="b" style="left:0;top:737px;width:1667px;height:301px;background:linear-gradient(to bottom,rgba(0,0,0,0) 0,rgba(0,0,0,.09) 23px,rgba(0,0,0,.25) 53px,rgba(0,0,0,.40) 83px,rgba(0,0,0,.48) 113px,rgba(0,0,0,.545) 143px,rgba(0,0,0,.60) 193px,rgba(0,0,0,.615) 301px)"></div>
<div class="b" style="left:0;top:1038px;width:1667px;height:4px;background:#000"></div>
<div class="b" style="left:1466px;top:761px;width:210px;height:258px;border-radius:2px 0 0 9px;background:#0a0a0a;overflow:hidden">
<div class="b" style="left:3px;top:4px;width:210px;height:251px;border-radius:9px;background:#121212"></div>
<svg style="left:66.5px;top:26px" width="70" height="80.5" viewBox="0 0 71 81"><defs><filter id="bl" x="-10%" y="-10%" width="120%" height="120%"><feGaussianBlur stdDeviation="0.7"/></filter><clipPath id="ca"><rect x="0" y="0" width="71" height="81" rx="12.5"/></clipPath><linearGradient id="ga" x1="0" x2="1"><stop offset="0" stop-color="#aab6c2"/><stop offset=".35" stop-color="#c4cdd6"/><stop offset=".8" stop-color="#b4c1cf"/><stop offset="1" stop-color="#a2b4c6"/></linearGradient><radialGradient id="sk" cx=".45" cy=".4" r=".7"><stop offset="0" stop-color="#d6ab92"/><stop offset="1" stop-color="#b98c76"/></radialGradient></defs><g clip-path="url(#ca)"><g filter="url(#bl)"><rect x="-4" y="-4" width="79" height="89" fill="url(#ga)"/><rect x="0" y="0" width="71" height="16" fill="#9fb0c0" opacity=".55"/><rect x="2" y="18" width="19" height="28" fill="#d3dae0" opacity=".8"/><rect x="59" y="2" width="4" height="62" fill="#8da0b2" opacity=".7"/><rect x="50" y="20" width="3" height="40" fill="#9eafbf" opacity=".6"/><rect x="0" y="45" width="8" height="16" fill="#3f4c5a"/><rect x="16" y="46" width="8" height="14" fill="#46525f"/><path d="M25 44 H45 V56 H25Z" fill="#c79c86"/><path d="M-2 82 V62 Q4 58 24 51 L35 60 L45 50 Q62 58 73 66 V82Z" fill="#141d33"/><path d="M24 51 L27 50 L35 60 L43 50 L45 50.5 L46 82 H24Z" fill="#c9ced8"/><path d="M30.5 58.5 H36.5 L38 64 L36.6 82 H30.4 L31.6 64Z" fill="#25406f"/><path d="M19.5 30 Q15 4 33 1.2 Q50 -1.5 54 15 Q55 24 51 31 L45 12 L25 12Z" fill="#47301f"/><ellipse cx="35" cy="30" rx="15" ry="20" fill="url(#sk)"/><path d="M19.8 27 Q17 6 33 2.5 Q49 0 52.5 15 Q53.5 22 50.6 28 Q50 17 44.5 11.5 Q36 8.5 26 12.5 Q21 18 19.8 27Z" fill="#47301f"/><ellipse cx="28.5" cy="23.3" rx="2.2" ry="1.3" fill="#3a2a22"/><ellipse cx="41" cy="23.3" rx="2.2" ry="1.3" fill="#3a2a22"/><path d="M24.5 20 Q28.5 18.4 32 20 M37.5 20 Q41 18.4 45 20" stroke="#5a3c2a" stroke-width="1.1" fill="none"/><path d="M33 32.5 Q35 34 37 32.5" stroke="#a87862" stroke-width="1.3" fill="none"/><path d="M29.5 38.4 Q35 40 40.5 38.4" stroke="#9c5e50" stroke-width="1.5" fill="none"/><path d="M26 47 Q35 53 44 47" stroke="#b48a74" stroke-width="1.2" fill="none" opacity=".6"/></g></g></svg>
<div class="b" style="left:4px;top:108px;width:52px;height:20px;border-radius:5px;background:#1b1b1b"></div>
<div class="t " style="left:7.5px;top:110.0px;font:400 12px/16px 'Liberation Sans',sans-serif;color:#8f8f8f;transform-origin:0 50%;transform:scaleX(0.9116);">Applicant</div>
<svg style="left:66.5px;top:152px" width="70" height="80" viewBox="0 0 70 80"><defs><clipPath id="cb"><rect x="0" y="0" width="70" height="80" rx="12.5"/></clipPath><linearGradient id="gb" x1="0" x2="1"><stop offset="0" stop-color="#2f4654"/><stop offset=".06" stop-color="#8f98a2"/><stop offset=".3" stop-color="#a2a8ae"/><stop offset=".7" stop-color="#8e9196"/><stop offset="1" stop-color="#7e8084"/></linearGradient><radialGradient id="sk2" cx=".4" cy=".4" r=".7"><stop offset="0" stop-color="#c09682"/><stop offset="1" stop-color="#9c7462"/></radialGradient></defs><g clip-path="url(#cb)"><g filter="url(#bl)"><rect x="-4" y="-4" width="78" height="88" fill="url(#gb)"/><rect x="0" y="60" width="14" height="6" fill="#b7a58e" opacity=".7"/><path d="M19 50 Q15 4 40 1.5 Q58 3 58 30 Q59 48 55 52 Q48 56 40 52 L26 53 Q21 54 19 50Z" fill="#583a30"/><path d="M28 44 H45 V60 H28Z" fill="#a57b69"/><path d="M8 82 L12 62 Q20 55 28 53 L37 78 L47 52 Q58 56 63 61 L68 82Z" fill="#1c2840"/><path d="M27.5 53 L31 50 L34 66 L37 78 L35 82 H30 Z" fill="#a9aeb6"/><path d="M34 66 L45.5 51 L47 52 L37 78Z" fill="#b4b9c0"/><ellipse cx="36.5" cy="29" rx="13.4" ry="19.5" fill="url(#sk2)"/><path d="M22 34 Q19 10 37 7 Q52 8 51 26 Q46 16 40 13 Q30 14 26 22 Q24 28 22 34Z" fill="#583a30"/><ellipse cx="29" cy="25.6" rx="2.4" ry="1.8" fill="#2a1d1a"/><ellipse cx="43.5" cy="26" rx="2.2" ry="1.7" fill="#2a1d1a"/><path d="M25 21.6 Q29 19.6 33 21.4 M40 21.6 Q44 20 47.5 22" stroke="#50342a" stroke-width="1" fill="none"/><path d="M30.5 40.6 Q34 42 37.5 40.6" stroke="#94544a" stroke-width="1.6" fill="none"/></g><rect width="70" height="80" fill="#000" opacity=".22"/></g></svg>
<div class="b" style="left:4px;top:234px;width:60px;height:20px;border-radius:5px;background:#1a1a1a"></div>
<div class="t " style="left:7.5px;top:236.5px;font:400 12px/16px 'Liberation Sans',sans-serif;color:#5a5a5a;transform-origin:0 50%;transform:scaleX(0.8860);">Interviewer</div>
</div>
<div class="t" style="left:17px;top:854.6px;font:200 32px/42px 'DejaVu Sans Light','DejaVu Sans','Liberation Sans',sans-serif;color:#fff;-webkit-text-stroke:.45px #fff;transform-origin:0 50%;transform:scaleX(.773)">3sum_ss_applicant</div>
<div class="b" style="left:1584px;top:948.3px;width:73px;height:1.4px;background:rgba(255,255,255,.32)"></div>
<div class="b" style="left:17px;top:947px;width:1552px;height:4px;background:#3c9ae8"></div>
<div class="b" style="left:1567.9px;top:940.4px;width:13.4px;height:13.4px;border-radius:50%;border:2px solid #3d9be9;background:rgba(120,90,80,.25)"></div>
<div class="t " style="left:17.0px;top:962.0px;font:400 11.5px/15px 'Liberation Sans',sans-serif;color:#fff;transform-origin:0 50%;transform:scaleX(0.8600);">0:05:33</div>
<div class="t " style="left:1623.0px;top:962.0px;font:400 11.5px/15px 'Liberation Sans',sans-serif;color:#fff;transform-origin:0 50%;transform:scaleX(0.8600);">0:00:08</div>
<div class="b" style="left:1260px;top:906px;width:38px;height:30px;border-radius:4px;background:#2c2c2c;box-shadow:0 3px 12px rgba(0,0,0,.32)"></div>
<div class="t " style="left:1268.0px;top:913.0px;font:400 12px/16px 'Liberation Sans',sans-serif;color:#fff;transform-origin:0 50%;transform:scaleX(0.8043);">Seek</div>
<div class="b" style="left:12px;top:988px;width:27px;height:31px;border-radius:50%;background:#141414"></div>
<svg style="left:18px;top:995px" width="16" height="18" viewBox="0 0 16 18"><path d="M2.2 10.2 L9.6 2 L12.4 4.6 L5 13 H2.2Z M2 16 H14" fill="none" stroke="#1d7a4c" stroke-width="1.2" stroke-linejoin="round"/></svg>
<svg style="left:30px;top:994px" width="20" height="20" viewBox="0 0 20 20"><path d="M1.6 6.6 H3.6 L7 2.8 V16.8 L3.6 13 H1.6Z" fill="none" stroke="#fff" stroke-width="1.3" stroke-linejoin="round"/><path d="M9.2 6.6 Q10.8 9.8 9.2 13 M11.6 4.2 Q14.4 9.8 11.6 15.4 M14 1.6 Q18.6 9.8 14 18" fill="none" stroke="#fff" stroke-width="1.15"/></svg>
<svg style="left:74px;top:994.6px" width="19" height="19" viewBox="0 0 19 19"><path d="M0.9 0.9 H18.1 V14 H6.4 L3.2 17.6 V14 H0.9Z" fill="none" stroke="#fff" stroke-width="1.5" stroke-linejoin="round"/><path d="M2.6 8.6 H16.4 M2.6 11.3 H16.4" stroke="#fff" stroke-width="1.3"/></svg>
<svg style="left:783px;top:993px" width="21" height="12" viewBox="0 0 21 12"><path d="M1.9 9.5 A8.7 8.7 0 0 1 19 9.6" fill="none" stroke="#fff" stroke-width="1.3"/><path d="M1.8 4.4 V9.7 H7" fill="none" stroke="#fff" stroke-width="1.3"/></svg>
<div class="t " style="left:788.3px;top:1000.8px;font:400 12px/16px 'Liberation Sans',sans-serif;color:#fff;transform-origin:0 50%;transform:scaleX(0.8241);">10</div>
<svg style="left:832px;top:994.5px" width="13" height="19" viewBox="0 0 13 19"><path d="M1.2 1.6 L11 9.5 L1.2 17.4Z" fill="none" stroke="#fff" stroke-width="1.3" stroke-linejoin="round"/></svg>
<svg style="left:826.4px;top:990px" width="8" height="4.4" viewBox="0 0 8 4.4"><path d="M0 0 H8 L4 4.4Z" fill="#363636"/></svg>
<svg style="left:870.4px;top:993px" width="21" height="12" viewBox="0 0 21 12"><path d="M19.1 9.5 A8.7 8.7 0 0 0 2 9.6" fill="none" stroke="#fff" stroke-width="1.3"/><path d="M19.2 4.4 V9.7 H14" fill="none" stroke="#fff" stroke-width="1.3"/></svg>
<div class="t " style="left:874.9px;top:1000.8px;font:400 12px/16px 'Liberation Sans',sans-serif;color:#fff;transform-origin:0 50%;transform:scaleX(0.8466);">30</div>
<svg style="left:1450px;top:993px" width="20" height="22" viewBox="0 0 20 22"><path d="M2.6 15.6 L13.6 3.4 Q15.4 1.6 17.2 3.2 Q18.9 4.9 17.4 6.8 L6.4 19 L1.4 20.6Z M12.2 5 L15.9 8.4 M2.6 15.6 L6.4 19" fill="none" stroke="#fff" stroke-width="1.3" stroke-linejoin="round"/></svg>
<svg style="left:1494.6px;top:997.2px" width="18" height="14" viewBox="0 0 18 14"><rect x="0.8" y="0.8" width="16.4" height="12" fill="none" stroke="#fff" stroke-width="1.5"/><rect x="6" y="4.2" width="9.6" height="6.6" fill="#fff"/><rect x="9.6" y="5.6" width="4.2" height="2.6" fill="#444"/></svg>
<div class="t " style="left:1540.3px;top:996.1px;font:400 10px/13px 'Liberation Sans',sans-serif;color:#fff;transform-origin:0 50%;transform:scaleX(0.7790);">360</div>
<svg style="left:1537px;top:996px" width="21" height="18" viewBox="0 0 21 18"><circle cx="17.9" cy="1.5" r="0.9" fill="none" stroke="#fff" stroke-width=".7"/><path d="M2.4 8.2 Q0.4 10.6 2.6 12.6 Q5 14.6 10.4 14.8 M18.2 8.2 Q20.4 10.6 18.4 12.4 Q16.8 13.8 14 14.4" fill="none" stroke="#fff" stroke-width="1.2"/><path d="M8.4 12 L11.4 14.8 L8.4 17.4" fill="none" stroke="#fff" stroke-width="1.2"/></svg>
<svg style="left:1582px;top:994px" width="18" height="20" viewBox="0 0 18 20"><path d="M17.6 0.4 L10.6 8 M10.4 2.6 V8.2 H16 M0.6 19.4 L7.6 11.8 M7.8 17.2 V11.6 H2.2" fill="none" stroke="#fff" stroke-width="1.3"/></svg>
<div class="b" style="left:1626px;top:1002.8px;width:2.6px;height:2.6px;border-radius:2px;background:#fff"></div><div class="b" style="left:1633.3px;top:1002.8px;width:2.6px;height:2.6px;border-radius:2px;background:#fff"></div><div class="b" style="left:1640.2px;top:1002.8px;width:2.6px;height:2.6px;border-radius:2px;background:#fff"></div>
</div>
</body></html>
